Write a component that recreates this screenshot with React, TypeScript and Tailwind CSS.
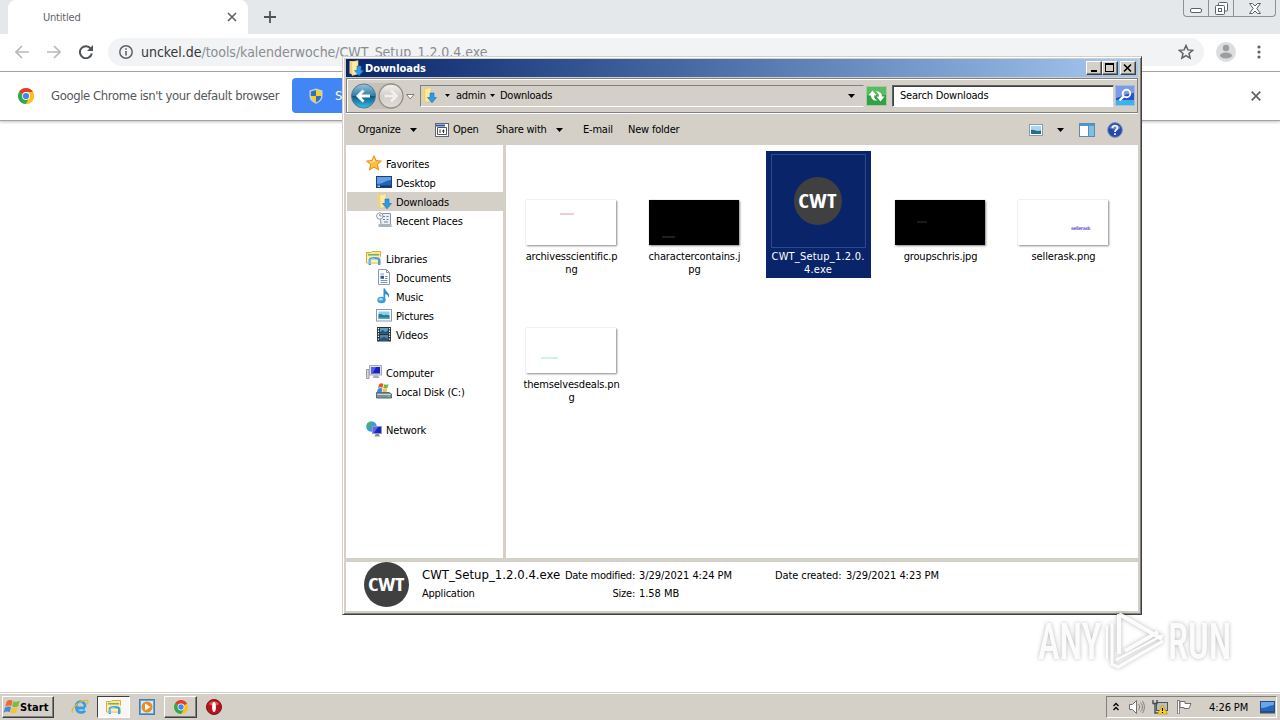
import type { ReactNode } from 'react'

const FONT = "font-['DejaVu_Sans_Condensed','DejaVu_Sans','Noto_Sans',sans-serif] [font-stretch:condensed]"

/* ---------- ICONS ---------- */

function Svg({ w = 16, h = 16, children }: { w?: number; h?: number; children: ReactNode }) {
  return (
    <svg width={w} height={h} viewBox={`0 0 ${w} ${h}`} className="shrink-0" fill="none">
      {children}
    </svg>
  )
}

function ChromeIcon() {
  return (
    <Svg>
      <circle cx="8" cy="8" r="8" fill="#fbc116" />
      <path d="M8 8 L1.100 4 A8 8 0 0 1 14.900 4 Z" fill="#e33b2e" />
      <path d="M8 8 L1.100 4 A8 8 0 0 0 8 16 L11 10 Z" fill="#2da94f" />
      <path d="M8 4 H14.900 A8 8 0 0 1 8 16 L11.500 10 Z" fill="#fbc116" />
      <circle cx="8" cy="8" r="3.900" fill="#fff" />
      <circle cx="8" cy="8" r="3.100" fill="#4285f4" />
    </Svg>
  )
}

function ShieldIcon() {
  return (
    <Svg>
      <path d="M8 .5 L14.500 2.500 V8 C14.500 12 11 14.500 8 15.800 C5 14.500 1.500 12 1.500 8 V2.500 Z" fill="#c9d2dc" />
      <path d="M8 2 V8 H2.800 V3.600 Z" fill="#2f6fc4" />
      <path d="M8 2 V8 H13.200 V3.600 Z" fill="#f6cf2b" />
      <path d="M2.800 8 H8 V14.400 C5 13 2.800 11 2.800 8 Z" fill="#f6cf2b" />
      <path d="M13.200 8 H8 V14.400 C11 13 13.200 11 13.200 8 Z" fill="#2f6fc4" />
    </Svg>
  )
}

function DownloadsIcon() {
  return (
    <Svg>
      <path d="M1.500 1 H7 V15 L1.500 13.500 Z" fill="#f3d67c" />
      <path d="M3.500 2 L10 0.500 V14 L4 15.500 Z" fill="#fbeaa6" stroke="#e5c25f" strokeWidth=".6" />
      <path d="M9 6 H13 V10.500 H15.500 L11 15.800 L6.500 10.500 H9 Z" fill="#2f9be4" stroke="#1a6fb8" strokeWidth=".6" />
    </Svg>
  )
}

function StarIcon() {
  return (
    <Svg>
      <path
        d="M8 .8 L10.100 5.600 L15.400 6.100 L11.400 9.600 L12.600 14.900 L8 12.100 L3.400 14.900 L4.600 9.600 L.6 6.100 L5.900 5.600 Z"
        fill="#ffbe3d"
        stroke="#ea8a1f"
      />
      <path d="M8 3 L9.200 6.600 L5 8 L3 6.800 L6.500 6.400 Z" fill="#ffe59a" />
    </Svg>
  )
}

function DesktopIcon() {
  return (
    <Svg>
      <rect x=".5" y="2.500" width="15" height="11" fill="#2464b8" stroke="#1d3f74" />
      <path d="M1 3 H15 V6 C10 6 7 10 1 10 Z" fill="#5fa0e6" />
      <path d="M1 11.500 H15 V13 H1 Z" fill="#16366a" />
      <path d="M1.500 11.500 H4 V13 H1.500 Z" fill="#7fe0e8" />
    </Svg>
  )
}

function RecentIcon() {
  return (
    <Svg>
      <path d="M4 1.500 H14.500 V12.500 H5 Z" fill="#e9eff4" stroke="#8795a3" />
      <path d="M7 4.500 H9 M10.500 4.500 H12.500 M7 7.500 H9 M10.500 7.500 H12.500 M8 10 H12" stroke="#6c8298" />
      <path d="M2.500 12 H15.500 V15 H2.500 Z" fill="#aab4bd" />
      <circle cx="3.800" cy="4" r="3.200" fill="#fff" stroke="#8e9aa6" />
      <path d="M3.800 2 V4 H5.500" stroke="#5b6b7a" strokeWidth=".8" />
    </Svg>
  )
}

function LibraryIcon() {
  return (
    <Svg>
      <path d="M.5 2.500 H5 L6 1.500 H14.500 V13 H.5 Z" fill="#fbe692" stroke="#d9ab3b" />
      <path d="M2 4 H13 V5.500 H2 Z" fill="#6fb36b" />
      <path d="M1 6.500 H15 V12.500 H1 Z" fill="#fdf0b5" />
      <path d="M3.800 15 V10 C3.800 7.500 13.200 7.500 13.200 10 V15" stroke="#4a9bd8" strokeWidth="2.400" />
      <path d="M4 14 V10.200 C5 9 7 8.600 8.500 8.600" stroke="#a9dcf8" />
    </Svg>
  )
}

function DocumentIcon() {
  return (
    <Svg>
      <path d="M2.500 .5 H10.500 L13.500 3.500 V15.500 H2.500 Z" fill="#fdfeff" stroke="#8b9aab" />
      <path d="M10.500 .5 V3.500 H13.500" stroke="#8b9aab" />
      <path d="M4.500 5 H8 M4.500 11.500 H11.500 M4.500 13.500 H11.500 M9 7.500 H11.500 M9 9.500 H11.500" stroke="#7c93b4" />
      <path d="M4.500 6.800 H8 V9.800 H4.500 Z" fill="#2d5ba2" />
    </Svg>
  )
}

function MusicIcon() {
  return (
    <Svg>
      <path d="M7.500 .5 H9 C9 3.500 15 5 12.500 10 C12.600 7.500 11 6.500 9.200 6 V12 H7.500 Z" fill="#2d8fd0" />
      <ellipse cx="5.500" cy="12" rx="4.200" ry="3.300" fill="#3a9ddc" />
      <ellipse cx="4.800" cy="11.300" rx="2" ry="1.200" fill="#a5dcf8" />
    </Svg>
  )
}

function PictureIcon() {
  return (
    <Svg>
      <rect x=".5" y="2.500" width="15" height="11.500" fill="#fff" stroke="#8d9aa5" />
      <rect x="2.500" y="4.500" width="11" height="7.500" fill="#8ccdf0" />
      <path d="M2.500 7.500 C5 6 7 9 9 8 C11 7 12 9 13.500 8 V12 H2.500 Z" fill="#247c8e" />
      <path d="M2.500 10.500 H13.500 V12 H2.500 Z" fill="#48aed0" />
    </Svg>
  )
}

function VideoIcon() {
  return (
    <Svg>
      <rect x="1" y="1" width="14" height="14.500" fill="#2c3138" />
      <rect x="4" y="2" width="8" height="5.800" fill="#5d9cc4" />
      <rect x="4" y="9" width="8" height="5.800" fill="#4188ae" />
      <path d="M4 6 L7 4 L9 6 L12 4.500 V7.800 H4 Z M4 13 L8 11 L12 13 V14.800 H4 Z" fill="#28526d" />
      <path d="M2.500 2 V15 M13.500 2 V15" stroke="#fff" strokeDasharray="1.300 1.300" strokeWidth="1.200" />
    </Svg>
  )
}

function ComputerIcon() {
  return (
    <Svg>
      <path d="M.5 5.500 H3 V14.500 H.5 Z" fill="#d5d8da" stroke="#9a9ea2" />
      <rect x="3.500" y="1.500" width="12" height="9.500" fill="#d8dde5" stroke="#a5abb4" />
      <rect x="5" y="3" width="9" height="6.500" fill="#1a22c4" />
      <path d="M5 3 H10 L6.500 9.500 H5 Z" fill="#5763e6" />
      <path d="M8 11.500 H12 L13.500 14 H6.500 Z" fill="#a6abb3" />
    </Svg>
  )
}

function DiskIcon() {
  return (
    <Svg>
      <path d="M3 1.500 C5 -.2 6 .2 7.500 1 L6.500 4.800 C5 4 4 4 2 5.300 Z" fill="#e8552d" />
      <path d="M8.300 1.300 C10 2 11 2 12.500 1 L11.500 5 C10 5.800 8.800 5.700 7.300 5 Z" fill="#6fba3a" />
      <path d="M1.800 6 C4 4.700 5 4.900 6.400 5.600 L5.600 9.500 H.8 Z" fill="#3a88dc" />
      <path d="M7 5.800 C9 6.500 10 6.500 11.300 5.800 L10.500 9.500 H6.200 Z" fill="#f6c22d" />
      <path d="M.5 9.500 H13 L15.500 11 V15 H.5 Z" fill="#7c8f9c" stroke="#5a6b78" />
      <path d="M1 11.500 H15" stroke="#c7d3da" />
      <rect x="11.500" y="12.500" width="2.500" height="1.500" fill="#59d84e" />
    </Svg>
  )
}

function NetworkIcon() {
  return (
    <Svg>
      <circle cx="5.500" cy="5.500" r="5.300" fill="#3d9bdd" />
      <path d="M2 2 C5 .5 7 1 6 3 C4 4 5 6 3 7 C1 6 1 4 2 2 Z M7 6 L10 5 L9 9 L6 10 Z" fill="#4cb454" />
      <rect x="6.500" y="5.500" width="9" height="7" fill="#1b23c6" stroke="#8e9ac0" />
      <path d="M7 6 H12 L8 12 H7 Z" fill="#5b68e4" />
      <path d="M9.500 13 H13 L14 15.500 H8.500 Z" fill="#8c9097" />
    </Svg>
  )
}

function WinFlag() {
  return (
    <Svg w={17} h={16}>
      <path d="M3.600 2.500 C6 .5 8 .8 9.500 1.800 L8.300 7 C6.500 6 5 6.200 2.300 7.600 Z" fill="#ee6a35" />
      <path d="M10.300 2.200 C12.500 3.300 14 3 16.800 1.500 L15.200 7.200 C12.800 8.400 11 8.200 9.100 7.400 Z" fill="#7dbb42" />
      <path d="M2 8.600 C5 7 6.500 7.200 8 8 L6.700 13.200 C5 12.300 3.200 12.300 .5 13.900 Z" fill="#4a86d4" />
      <path d="M8.800 8.400 C11 9.500 12.500 9.200 14.900 8.100 L13.400 13.600 C11.500 15 9.500 14.700 7.400 13.700 Z" fill="#f5c433" />
    </Svg>
  )
}

function MenuArrow({ className = '' }: { className?: string }) {
  return (
    <svg width="7" height="4" viewBox="0 0 7 4" className={`shrink-0 ${className}`}>
      <path d="M0 0 H7 L3.500 4 Z" fill="#000" />
    </svg>
  )
}

function CrumbArrow() {
  return (
    <Svg w={5} h={3}>
      <path d="M0 0 H5 L2.500 3 Z" fill="#000" />
    </Svg>
  )
}

function CwtBadge({ size }: { size: number }) {
  return (
    <svg width={size} height={size} viewBox="0 0 48 48" className="shrink-0">
      <circle cx="24" cy="24" r="24" fill="#404040" />
      <text
        x="23.500"
        y="30.500"
        textAnchor="middle"
        textLength="38.500"
        lengthAdjust="spacingAndGlyphs"
        fontFamily="'Open Sans', 'Noto Sans', sans-serif"
        fontWeight="700"
        fontSize="19"
        fill="#fff"
      >
        CWT
      </text>
    </svg>
  )
}

/* ---------- BROWSER ---------- */

function Browser() {
  return (
    <div className="flex h-[692px] flex-col bg-white">
      <div className="flex h-[34px] items-start bg-[#e4e8eb]">
        <div className="ml-2 flex h-[34px] w-60 items-center rounded-t-lg bg-white pr-[11px] pl-[35px] text-[#5f6368]">
          <span className="flex-1 pt-[2px] text-[11px] tracking-[-0.2px]">Untitled</span>
          <Svg w={10} h={10}>
            <path d="M1 1 L9 9 M9 1 L1 9" stroke="#5f6368" strokeWidth="1.700" />
          </Svg>
        </div>
        <div className="mt-[11px] ml-[16px]">
          <Svg w={12} h={12}>
            <path d="M6 0 V12 M0 6 H12" stroke="#4f5357" strokeWidth="1.800" />
          </Svg>
        </div>
        <div className="mr-1 ml-auto flex h-[17px] w-[93px] rounded-b border border-t-0 border-[#8d9196]">
          <div className="flex w-[25px] items-center justify-center border-r border-[#8d9196] pt-1">
            <Svg w={12} h={5}>
              <rect x=".5" y=".5" width="11" height="4" rx="1.500" stroke="#5d6268" fill="#fff" />
            </Svg>
          </div>
          <div className="flex w-[25px] items-center justify-center border-r border-[#8d9196]">
            <Svg w={13} h={13}>
              <rect x="3.500" y=".5" width="9" height="8.500" rx="1" stroke="#5d6268" fill="#fff" />
              <rect x=".5" y="3.500" width="9" height="9" rx="1" stroke="#5d6268" fill="#fff" />
              <rect x="3.500" y="6.500" width="3" height="3" stroke="#5d6268" />
            </Svg>
          </div>
          <div className="flex flex-1 items-center justify-center">
            <Svg w={12} h={11}>
              <path
                d="M.5 .5 H3.500 L6 3 L8.500 .5 H11.500 L7.800 5.500 L11.500 10.500 H8.500 L6 8 L3.500 10.500 H.5 L4.200 5.500 Z"
                stroke="#5d6268"
                fill="#fff"
              />
            </Svg>
          </div>
        </div>
      </div>

      {/* address row */}
      <div className="flex h-[38px] items-center border-b border-[#a9abae] pr-[15px] pb-[2px] pl-[15px]">
        <Svg w={14} h={14}>
          <path d="M14 7 H1.500 M7 1 L1 7 L7 13" stroke="#b6b9bd" strokeWidth="1.700" />
        </Svg>
        <div className="ml-[18px]">
          <Svg w={14} h={14}>
            <path d="M0 7 H12.500 M7 1 L13 7 L7 13" stroke="#b6b9bd" strokeWidth="1.700" />
          </Svg>
        </div>
        <div className="ml-[18px]">
          <Svg w={14} h={14}>
            <path d="M12 4 A6 6 0 1 0 12.800 8.500" stroke="#505458" strokeWidth="2" />
            <path d="M14 0 V6 H8 Z" fill="#505458" />
          </Svg>
        </div>
        <div className="ml-[15px] flex h-7 w-[1096px] items-center rounded-full bg-[#f1f3f4] pr-[10px] pl-[11px]">
          <Svg w={14} h={14}>
            <circle cx="7" cy="7" r="6.200" stroke="#5f6368" strokeWidth="1.500" />
            <path d="M7 6 V10.500 M7 3.300 V4.800" stroke="#5f6368" strokeWidth="1.600" />
          </Svg>
          <span className="ml-2 flex-1 pt-[2px] text-[14px] tracking-[-0.03px] whitespace-nowrap text-[#8a8d91]">
            <span className="text-[#34373b]">unckel.de</span>/tools/kalenderwoche/CWT_Setup_1.2.0.4.exe
          </span>
          <Svg w={16} h={16}>
            <path
              d="M8 1.500 L9.900 5.900 L14.700 6.300 L11 9.500 L12.100 14.200 L8 11.700 L3.900 14.200 L5 9.500 L1.300 6.300 L6.100 5.900 Z"
              stroke="#5f6368"
              strokeWidth="1.500"
            />
          </Svg>
        </div>
        <div className="ml-[12px]">
          <Svg w={20} h={20}>
            <circle cx="10" cy="10" r="10" fill="#dcdddf" />
            <circle cx="10" cy="6" r="3.200" fill="#9b9da0" />
            <ellipse cx="10" cy="13.500" rx="6" ry="3" fill="#9b9da0" />
          </Svg>
        </div>
        <div className="ml-auto pr-[4px]">
          <Svg w={4} h={14}>
            <circle cx="2" cy="2" r="1.600" fill="#5f6368" />
            <circle cx="2" cy="7" r="1.600" fill="#5f6368" />
            <circle cx="2" cy="12" r="1.600" fill="#5f6368" />
          </Svg>
        </div>
      </div>

      {/* default browser infobar */}
      <div className="flex h-[49px] items-center border-b border-[#a2a2a2] pr-[19px] pb-px pl-[18px] shadow-[0_1px_3px_rgba(0,0,0,0.25)]">
        <ChromeIcon />
        <span className="ml-[17px] w-[241px] text-[13px] tracking-[-0.41px] whitespace-nowrap text-[#54575b]">
          Google Chrome isn't your default browser
        </span>
        <div className="flex h-[35px] w-[110px] items-center rounded bg-[#4285f4] pl-4 text-[13px] text-white">
          <ShieldIcon />
          <span className="ml-[11px] whitespace-nowrap">Set as default</span>
        </div>
        <div className="ml-auto">
          <Svg w={10} h={10}>
            <path d="M.7 .7 L9.300 9.300 M9.300 .7 L.7 9.300" stroke="#5f6368" strokeWidth="1.700" />
          </Svg>
        </div>
      </div>
    </div>
  )
}

/* ---------- EXPLORER ---------- */

function CaptionButton({ children }: { children: ReactNode }) {
  return (
    <div className="flex h-[14px] w-4 items-center justify-center border border-t-white border-r-[#404040] border-b-[#404040] border-l-white bg-[#d4d0c8] shadow-[inset_-1px_-1px_0_#808080]">
      {children}
    </div>
  )
}

function TitleBar() {
  return (
    <div className="flex h-[18px] items-center bg-linear-to-r from-[#0a246a] to-[#a6caf0] pr-[2px] pl-[2px]">
      <DownloadsIcon />
      <span className="ml-px flex-1 pt-[2px] text-[11px] font-bold tracking-[-0.02px] text-white">Downloads</span>
      <CaptionButton>
        <Svg w={10} h={10}>
          <path d="M2 8 H8" stroke="#000" strokeWidth="2" />
        </Svg>
      </CaptionButton>
      <CaptionButton>
        <Svg w={10} h={10}>
          <path d="M.5 1 V9 M8.500 1 V9 M0 8.500 H9" stroke="#000" />
          <path d="M0 1 H9" stroke="#000" strokeWidth="2" />
        </Svg>
      </CaptionButton>
      <div className="ml-[2px]">
        <CaptionButton>
          <Svg w={10} h={10}>
            <path d="M1 1.500 L8 8.500 M8 1.500 L1 8.500" stroke="#000" strokeWidth="1.600" />
          </Svg>
        </CaptionButton>
      </div>
    </div>
  )
}

function NavBar() {
  return (
    <div className="mt-px flex h-[35px] items-center border border-[#808080] pl-[3px] shadow-[inset_1px_1px_0_#fff,0_1px_0_#fff]">
      <svg width="66" height="30" viewBox="0 0 66 30" className="shrink-0" fill="none">
        <defs>
          <linearGradient id="back" x1="0" y1="0" x2="0" y2="1">
            <stop offset="0" stopColor="#9cc4dc" />
            <stop offset=".48" stopColor="#2f7fa8" />
            <stop offset=".5" stopColor="#0b5580" />
            <stop offset="1" stopColor="#35c3ea" />
          </linearGradient>
          <linearGradient id="fwd" x1="0" y1="0" x2="0" y2="1">
            <stop offset="0" stopColor="#f4f3f0" />
            <stop offset=".5" stopColor="#d2cec7" />
            <stop offset="1" stopColor="#e2dfd9" />
          </linearGradient>
        </defs>
        <path d="M13 2 H42 C52 2 52 28 42 28 H13 Z" fill="#c5c1ba" />
        <circle cx="13.500" cy="15" r="12" fill="url(#back)" stroke="#56788c" />
        <path d="M20 15 H8.500 M13.500 9.500 L8 15 L13.500 20.500" stroke="#fff" strokeWidth="2.800" />
        <circle cx="41" cy="15" r="12" fill="url(#fwd)" stroke="#93908b" strokeWidth="1.300" />
        <path d="M34.500 15 H46 M41 9.500 L46.500 15 L41 20.500" stroke="#f2f0ed" strokeWidth="2.600" />
        <path d="M56.500 13.500 H64 L60.200 18 Z" fill="#fff" stroke="#807d78" />
      </svg>
      <div className="ml-1 flex h-[22px] w-[444px] items-center border border-t-[#808080] border-r-[#d4d0c8] border-b-white border-l-[#808080] pr-[8px] text-[11px] tracking-[-0.25px]">
        <div className="pb-[2px]">
          <DownloadsIcon />
        </div>
        <div className="mr-[6px] ml-[8px]">
          <CrumbArrow />
        </div>
        <span className="w-[28px] pt-[2px]">admin</span>
        <div className="mr-[5px] ml-[6px]">
          <CrumbArrow />
        </div>
        <span className="flex-1 pt-[2px]">Downloads</span>
        <MenuArrow />
      </div>
      <div className="ml-[2px]">
        <Svg w={21} h={20}>
          <rect x=".5" y=".5" width="20" height="19" fill="#35a043" stroke="#a4cca4" />
          <path d="M1 1 H20 V9 H1 Z" fill="#5dba62" />
          <path d="M2.500 9.500 L6.500 4.500 L10.500 9.500 H8 C8 12 9.500 13.500 11.500 14.500 C7 15 5 12.500 5 9.500 Z" fill="#fff" />
          <path d="M18.500 10.500 L14.500 15.500 L10.500 10.500 H13 C13 8 11.500 6.500 9.500 5.500 C14 5 16 7.500 16 10.500 Z" fill="#fff" />
        </Svg>
      </div>
      <div className="ml-[5px] flex h-[22px] w-[222px] shrink-0 items-center border border-t-[#606060] border-r-[#d4d0c8] border-b-white border-l-[#606060] bg-white pt-[2px] pl-[7px] text-[11px] tracking-[-0.19px] shadow-[inset_1px_1px_0_#404040]">
        Search Downloads
      </div>
      <svg width="20" height="21" viewBox="0 0 20 21" className="ml-px shrink-0" fill="none">
        <rect x=".5" y=".5" width="19" height="20" rx="1" fill="#2a50c8" stroke="#a9bce6" />
        <path d="M1 1 H19 V8 C12 8 7 12 1 13 Z" fill="#7c9be6" />
        <path d="M1 15 H19 V20 H1 Z" fill="#39b3ec" />
        <circle cx="11.500" cy="8.500" r="3.800" stroke="#fff" strokeWidth="1.900" />
        <path d="M8.500 11.500 L4.500 15.500" stroke="#fff" strokeWidth="2.400" />
      </svg>
    </div>
  )
}

function Toolbar() {
  return (
    <div className="mt-px flex h-[31px] items-center pr-[15px] pl-[12px] text-[11px] tracking-[-0.2px] whitespace-nowrap">
      <span className="w-[52px] pt-px">Organize</span>
      <MenuArrow />
      <div className="ml-[18px]">
        <Svg w={14} h={14}>
          <rect x=".5" y=".5" width="13" height="13" fill="#fff" stroke="#63676d" />
          <path d="M1 2.500 H10" stroke="#2f57a8" strokeWidth="2" />
          <path d="M2.500 4.500 H11.500 V11.500 H2.500 Z" stroke="#4e555e" />
          <path d="M5 6.500 V10 M7 8 H9.500 M8.500 6.500 V10" stroke="#303840" />
        </Svg>
      </div>
      <span className="ml-[4px] w-[43px] pt-px">Open</span>
      <span className="w-[60px] pt-px">Share with</span>
      <MenuArrow />
      <span className="ml-[20px] w-[45px] pt-px">E-mail</span>
      <span className="pt-px">New folder</span>
      <div className="ml-auto flex items-center">
        <Svg w={14} h={12}>
          <rect x=".5" y=".5" width="13" height="11" fill="#fff" stroke="#8d9aa5" />
          <rect x="2" y="2" width="10" height="8" fill="#a6d8f2" />
          <path d="M2 6 C5 5 7 8 12 6.500 V10 H2 Z" fill="#23707f" />
        </Svg>
        <MenuArrow className="ml-[14px]" />
        <div className="ml-[15px]">
          <Svg w={16} h={14}>
            <rect x=".5" y=".5" width="15" height="13" fill="#fff" stroke="#5f88ab" />
            <path d="M1 2 H15" stroke="#4b98d2" strokeWidth="2" />
            <rect x="10" y="3" width="5" height="10" fill="#7cc0e6" />
            <path d="M9.500 3 V13" stroke="#5f88ab" />
          </Svg>
        </div>
        <div className="ml-[12px]">
          <Svg>
            <circle cx="8" cy="8" r="7.400" fill="#2748a8" stroke="#8195c8" />
            <path d="M2.500 6 A6 6 0 0 1 13.500 6 C10 8 6 8 2.500 6 Z" fill="#6a86d6" />
            <path d="M5.500 6 C5.500 3 10.500 3 10.500 6 C10.500 8 8 7.500 8 10 M8 11.300 V13" stroke="#fff" strokeWidth="1.700" />
          </Svg>
        </div>
      </div>
    </div>
  )
}

type TreeItem = { label: string; icon: ReactNode; child?: boolean; active?: boolean }

const TREE: TreeItem[][] = [
  [
    { label: 'Favorites', icon: <StarIcon /> },
    { label: 'Desktop', icon: <DesktopIcon />, child: true },
    { label: 'Downloads', icon: <DownloadsIcon />, child: true, active: true },
    { label: 'Recent Places', icon: <RecentIcon />, child: true },
  ],
  [
    { label: 'Libraries', icon: <LibraryIcon /> },
    { label: 'Documents', icon: <DocumentIcon />, child: true },
    { label: 'Music', icon: <MusicIcon />, child: true },
    { label: 'Pictures', icon: <PictureIcon />, child: true },
    { label: 'Videos', icon: <VideoIcon />, child: true },
  ],
  [
    { label: 'Computer', icon: <ComputerIcon /> },
    { label: 'Local Disk (C:)', icon: <DiskIcon />, child: true },
  ],
  [{ label: 'Network', icon: <NetworkIcon /> }],
]

function Sidebar() {
  return (
    <div className="flex w-[157px] shrink-0 flex-col gap-[19px] pt-[9px] pl-px">
      {TREE.map((group, g) => (
        <div key={g}>
          {group.map((item) => (
            <div
              key={item.label}
              className={`flex h-[19px] items-start gap-1 pt-px text-[11px] leading-[16px] tracking-[-0.16px] ${item.child ? 'pl-[29px]' : 'pl-[19px]'} ${item.active ? 'bg-[#d4d0c8]' : ''}`}
            >
              {item.icon}
              <span className="pt-[2px]">{item.label}</span>
            </div>
          ))}
        </div>
      ))}
    </div>
  )
}

type FileItem = { lines: string[]; bg?: string; mark?: string; text?: string; exe?: boolean }

const FILES: FileItem[] = [
  { lines: ['archivesscientific.p', 'ng'], bg: 'bg-white', mark: 'mt-[13px] ml-[34px] w-[14px] bg-[#eccfd2]' },
  { lines: ['charactercontains.j', 'pg'], bg: 'bg-black', mark: 'mt-[36px] ml-[13px] w-[13px] bg-[#242114]' },
  { lines: ['CWT_Setup_1.2.0.', '4.exe'], exe: true },
  { lines: ['groupschris.jpg'], bg: 'bg-black', mark: 'mt-[21px] ml-[22px] w-[10px] bg-[#1a1a1a]' },
  { lines: ['sellerask.png'], bg: 'bg-white', text: 'sellerask' },
  { lines: ['themselvesdeals.pn', 'g'], bg: 'bg-white', mark: 'mt-[29px] ml-[15px] w-[17px] bg-[#cdf3ea]' },
]

function FileTile({ file }: { file: FileItem }) {
  return (
    <div
      className={`flex h-[127px] w-[105px] flex-col items-center pt-[3px] ${file.exe ? 'bg-[#0a246a] pr-px tracking-[0.2px] text-white' : 'pr-[2px] tracking-[-0.16px]'}`}
    >
      {file.exe ? (
        <div className="flex h-[94px] w-[95px] items-center justify-center border border-[#2f4a8c]">
          <CwtBadge size={48} />
        </div>
      ) : (
        <div className="flex h-[94px] items-end pr-px pb-[3px]">
          <div className={`h-[45px] w-[90px] shadow-[1px_1px_2px_rgba(0,0,0,0.45),0_0_1px_rgba(0,0,0,0.2)] ${file.bg}`}>
            {file.mark && <div className={`h-[2px] ${file.mark}`} />}
            {file.text && (
              <div className="pt-[25px] pl-[53px] text-[5px] leading-[6px] font-bold tracking-[-0.4px] text-[#7a68e6]">{file.text}</div>
            )}
          </div>
        </div>
      )}
      <div className="mt-[2px] text-center text-[11px] leading-[13px] whitespace-nowrap">
        {file.lines.map((l) => (
          <div key={l}>{l}</div>
        ))}
      </div>
    </div>
  )
}

function Details() {
  return (
    <div className="flex h-[49px] bg-white pl-[18px] text-[11px] tracking-[-0.24px] whitespace-nowrap">
      <CwtBadge size={45} />
      <div className="ml-[13px] w-[138px] pt-[4px]">
        <div className="text-[13px] leading-[18px] tracking-[0.02px]">CWT_Setup_1.2.0.4.exe</div>
        <div className="pt-px leading-[18px]">Application</div>
      </div>
      <div className="grid w-[75px] content-start pt-[5px] text-right leading-[18px]">
        <span>Date modified:</span>
        <span>Size:</span>
      </div>
      <div className="ml-1 w-[136px] pt-[5px] leading-[18px] tracking-[-0.05px]">
        <div>3/29/2021 4:24 PM</div>
        <div>1.58 MB</div>
      </div>
      <div className="w-[71px] pt-[5px] leading-[18px] tracking-[-0.1px]">Date created:</div>
      <div className="pt-[5px] leading-[18px] tracking-[-0.05px]">3/29/2021 4:23 PM</div>
    </div>
  )
}

function Explorer() {
  return (
    <div className="absolute top-[56px] left-[342px] flex h-[559px] w-[800px] flex-col border border-t-[#d4d0c8] border-r-[#404040] border-b-[#404040] border-l-[#d4d0c8] bg-[#d4d0c8] p-[2px] pr-[3px] pl-[3px] text-black shadow-[inset_1px_1px_0_#fff,inset_-1px_-1px_0_#808080]">
      <TitleBar />
      <NavBar />
      <Toolbar />
      <div className="flex h-[413px]">
        <div className="flex bg-white">
          <Sidebar />
        </div>
        <div className="ml-[3px] grid flex-1 auto-rows-[127px] grid-cols-[repeat(5,105px)] content-start gap-x-[18px] gap-y-px bg-white pt-[6px] pl-[14px]">
          {FILES.map((f) => (
            <FileTile key={f.lines[0]} file={f} />
          ))}
        </div>
      </div>
      <div className="h-[4px]" />
      <Details />
    </div>
  )
}

/* ---------- WATERMARK ---------- */

function Watermark() {
  return (
    <svg width="236" height="68" viewBox="0 0 236 68" className="absolute top-[606px] left-[1032px] drop-shadow-[0_0_2px_rgba(0,0,0,0.3)]" fill="none">
      <g fontFamily="Roboto, sans-serif" fontWeight="500" fontSize="50" fill="#fff" fillOpacity=".92">
        <text transform="translate(6 53) scale(.735 1)">ANY</text>
        <text transform="translate(136 53) scale(.735 1)">RUN</text>
      </g>
      <g stroke="#fff" strokeOpacity=".92">
        <path d="M87 8 V48 M87 8 L130 33 M93 45 L126 26" strokeWidth="4" />
        <path d="M80 17 V58 L86 61 L131 35" strokeWidth="3" />
        <path d="M84 54 L131 29" strokeWidth="2.500" />
        <path d="M75 20 V53" strokeWidth="2" />
      </g>
    </svg>
  )
}

/* ---------- TASKBAR ---------- */

const RAISED = 'border border-t-white border-l-white border-r-[#404040] border-b-[#404040] shadow-[inset_-1px_-1px_0_#808080]'

function Taskbar() {
  return (
    <div className="flex h-7 border-t border-[#d4d0c8] bg-[#d4d0c8] pt-[3px] pl-[2px] text-black shadow-[inset_0_1px_0_#fff]">
      <div className={`flex h-[22px] w-[52px] items-center ${RAISED}`}>
        <WinFlag />
        <span className="pt-[2px] text-[11px] font-bold tracking-[0.1px]">Start</span>
      </div>
      <div className="ml-[17px] flex h-[22px] w-[26px] items-center">
        <Svg w={18} h={18}>
          <path d="M14 10 H5.500 A4.500 4.500 0 1 1 14 9 M5.500 10 C5.500 15.200 12.500 15.500 13.800 12.500" stroke="#3a9ede" strokeWidth="2.800" />
          <path d="M1.500 14.800 C-.5 10 10 1.500 16.500 2.500 C17.500 3 17 5 16 6" stroke="#e5b53a" strokeWidth="1.300" />
        </Svg>
      </div>
      <div className="flex h-[22px] w-[33px] items-center justify-center border border-t-[#404040] border-r-white border-b-white border-l-[#404040] bg-[#f8f7f5]">
        <LibraryIcon />
      </div>
      <div className="flex h-[22px] w-[34px] items-center justify-center">
        <Svg>
          <rect x=".5" y=".5" width="15" height="15" fill="#5ea9e2" stroke="#3f7fb8" />
          <rect x="2" y="2" width="12" height="12" fill="#d6eaf8" />
          <circle cx="8" cy="8" r="5.500" fill="#f08a1d" />
          <path d="M6 4.500 L11.500 8 L6 11.500 Z" fill="#fff" />
        </Svg>
      </div>
      <div className={`flex h-[22px] w-[33px] items-center justify-center ${RAISED}`}>
        <Svg w={14} h={14}>
          <circle cx="7" cy="7" r="7" fill="#fbc116" />
          <path d="M7 7 L1 3.500 A7 7 0 0 1 13 3.500 Z" fill="#e33b2e" />
          <path d="M7 7 L1 3.500 A7 7 0 0 0 7 14 L10 9 Z" fill="#2da94f" />
          <circle cx="7" cy="7" r="3.400" fill="#fff" />
          <circle cx="7" cy="7" r="2.700" fill="#4285f4" />
        </Svg>
      </div>
      <div className="ml-[9px] flex h-[22px] items-center">
        <Svg>
          <circle cx="8" cy="8" r="7.500" fill="#b8141b" stroke="#7d0f14" />
          <path d="M3 5 A6 6 0 0 1 13 5 C11 7 5 7 3 5 Z" fill="#e0575a" />
          <ellipse cx="8" cy="8" rx="1.900" ry="5" fill="#fff" />
        </Svg>
      </div>

      {/* tray */}
      <div className="mr-[3px] ml-auto flex h-[22px] w-[171px] items-center border border-t-[#808080] border-r-white border-b-white border-l-[#808080] pl-[6px]">
        <div className="pb-[2px]">
          <Svg w={6} h={9}>
            <path d="M.5 4 L3 1.500 L5.500 4 M.5 8 L3 5.500 L5.500 8" stroke="#000" strokeWidth="1.300" />
          </Svg>
        </div>
        <div className="ml-[9px]">
          <Svg w={17} h={16}>
            <path d="M1.500 5.500 H4.500 L8.500 1.500 V14.500 L4.500 10.500 H1.500 Z" fill="#fff" stroke="#707070" />
            <path d="M10.500 5 C12 7 12 9 10.500 11 M12.500 3.500 C15 6 15 10 12.500 12.500 M14.500 2 C17 6 17 10 14.500 14" stroke="#808080" />
          </Svg>
        </div>
        <div className="ml-[7px]">
          <Svg>
            <rect x="4.500" y="3.500" width="11" height="8" fill="#b9bcc0" stroke="#505357" />
            <path d="M1 1 V4.500 H5 V1 M3 4.500 V14 H7" stroke="#4a4d50" strokeWidth="1.400" />
            <path d="M10.500 6 L15.500 15 H5.500 Z" fill="#fbd51f" stroke="#c49a10" strokeWidth=".8" />
            <path d="M10.500 9 V12 M10.500 13 V14" stroke="#000" strokeWidth="1.200" />
          </Svg>
        </div>
        <div className="ml-[8px]">
          <Svg>
            <path d="M2.500 1 V15" stroke="#6b6b6b" strokeWidth="2.500" />
            <path d="M2.500 2 V14.500" stroke="#fff" />
            <path d="M4 2.500 H9 V4.500 H15 L13 9.500 H8 V8.500 H4 Z" fill="#fff" stroke="#707070" />
          </Svg>
        </div>
        <span className="ml-[17px] w-[51px] pt-[2px] text-[11px] tracking-[-0.1px] whitespace-nowrap">4:26 PM</span>
        <Svg w={15} h={14}>
          <rect x=".5" y="1.500" width="14" height="10" fill="#2567bd" stroke="#2c4a7a" />
          <path d="M1 2 H14 V5 C9 5 6 8 1 8 Z" fill="#6aa7e8" />
          <path d="M0 12 H15 V13.500 H0 Z" fill="#37506f" />
        </Svg>
      </div>
    </div>
  )
}

export default function App() {
  return (
    <div className={`relative h-[720px] w-[1280px] overflow-hidden bg-white ${FONT}`}>
      <Browser />
      <Taskbar />
      <Explorer />
      <Watermark />
    </div>
  )
}
